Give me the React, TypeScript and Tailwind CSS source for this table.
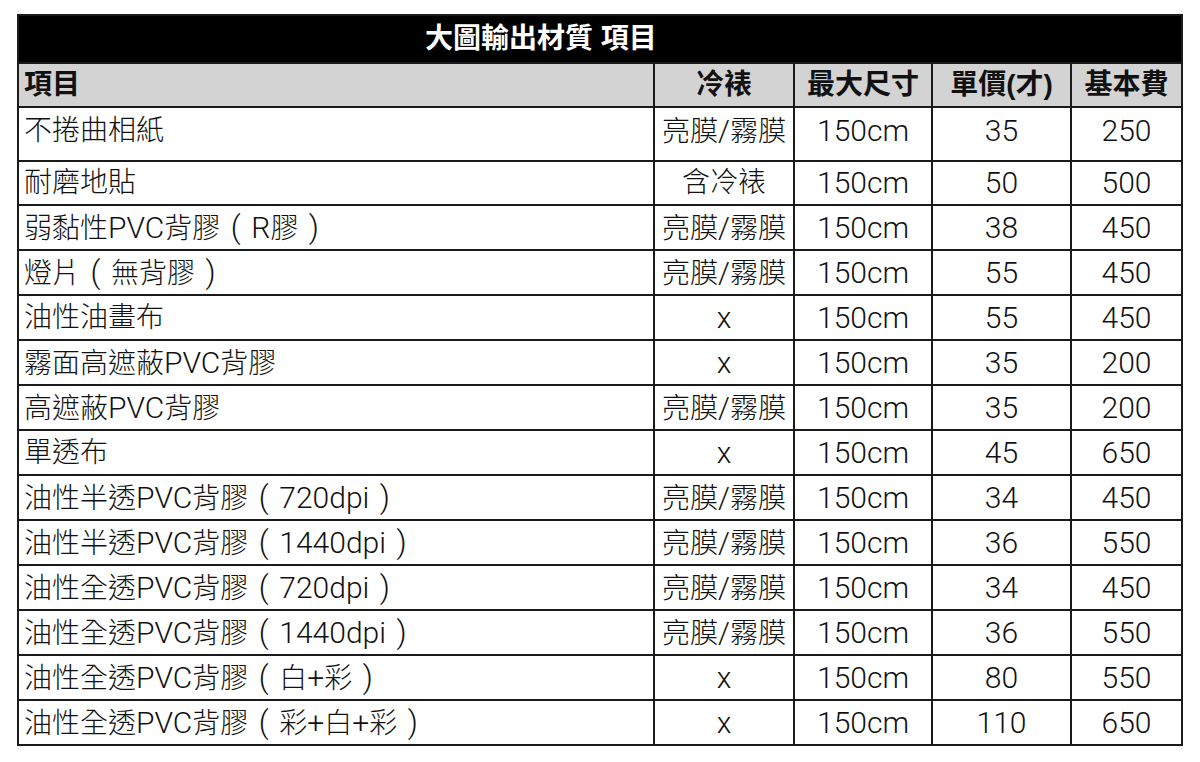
import React from "react";

type Row = {
  name: string;
  laminate: string;
  size: string;
  price: string;
  base: string;
};

const rows: Row[] = [
  { name: "不捲曲相紙", laminate: "亮膜/霧膜", size: "150cm", price: "35", base: "250" },
  { name: "耐磨地貼", laminate: "含冷裱", size: "150cm", price: "50", base: "500" },
  { name: "弱黏性PVC背膠（R膠）", laminate: "亮膜/霧膜", size: "150cm", price: "38", base: "450" },
  { name: "燈片（無背膠）", laminate: "亮膜/霧膜", size: "150cm", price: "55", base: "450" },
  { name: "油性油畫布", laminate: "x", size: "150cm", price: "55", base: "450" },
  { name: "霧面高遮蔽PVC背膠", laminate: "x", size: "150cm", price: "35", base: "200" },
  { name: "高遮蔽PVC背膠", laminate: "亮膜/霧膜", size: "150cm", price: "35", base: "200" },
  { name: "單透布", laminate: "x", size: "150cm", price: "45", base: "650" },
  { name: "油性半透PVC背膠（720dpi）", laminate: "亮膜/霧膜", size: "150cm", price: "34", base: "450" },
  { name: "油性半透PVC背膠（1440dpi）", laminate: "亮膜/霧膜", size: "150cm", price: "36", base: "550" },
  { name: "油性全透PVC背膠（720dpi）", laminate: "亮膜/霧膜", size: "150cm", price: "34", base: "450" },
  { name: "油性全透PVC背膠（1440dpi）", laminate: "亮膜/霧膜", size: "150cm", price: "36", base: "550" },
  { name: "油性全透PVC背膠（白+彩）", laminate: "x", size: "150cm", price: "80", base: "550" },
  { name: "油性全透PVC背膠（彩+白+彩）", laminate: "x", size: "150cm", price: "110", base: "650" },
];

const bodyFont = {
  fontFamily: 'Roboto, "Noto Sans CJK TC", sans-serif',
};
const headFont = {
  fontFamily: '"Liberation Sans", "Noto Sans CJK TC", sans-serif',
};

// latin runs are set a touch larger than the CJK text, and the full-width
// parens get a centred glyph like the original sheet
function Mixed({ text }: { text: string }) {
  const parts = text.split(/([\x20-\x7e]+|[（）])/).filter(Boolean);
  return (
    <>
      {parts.map((p, i) => {
        if (p === "（" || p === "）") {
          return (
            <span key={i} className="inline-block w-[31px] text-center text-[31px]">
              {p === "（" ? "(" : ")"}
            </span>
          );
        }
        if (/^[\x20-\x7e]+$/.test(p)) {
          return (
            <span key={i} className="text-[30px]">
              {p}
            </span>
          );
        }
        return <span key={i}>{p}</span>;
      })}
    </>
  );
}

const cell = "border-2 border-[#1a1a1a]";

export default function App() {
  return (
    <div className="min-h-screen bg-white pl-[17px] pt-[14px]" style={bodyFont}>
      <table className="w-[1164px] table-fixed border-collapse border-2 border-[#1a1a1a] text-[28px] font-light leading-none text-[#111]">
        <colgroup>
          <col className="w-[636px]" />
          <col className="w-[140px]" />
          <col className="w-[138px]" />
          <col className="w-[139px]" />
          <col className="w-[111px]" />
        </colgroup>
        <thead style={headFont}>
          <tr className="h-[48px] bg-black">
            <th colSpan={5} className={`${cell} pl-[406px] text-left text-[28px] font-bold text-white`}>
              大圖輸出材質 項目
            </th>
          </tr>
          <tr className="h-[44px] bg-[#d3d3d3] text-[28px] font-bold">
            <th className={`${cell} pl-[5px] text-left`}>項目</th>
            <th className={`${cell} text-center`}>冷裱</th>
            <th className={`${cell} text-center`}>最大尺寸</th>
            <th className={`${cell} text-center`}>單價(才)</th>
            <th className={`${cell} text-center`}>基本費</th>
          </tr>
        </thead>
        <tbody>
          {rows.map((r, i) => {
            const pad = i === 0 ? "pb-[6px]" : "";
            return (
              <tr key={r.name} className={i === 0 ? "h-[54px]" : i === 1 ? "h-[44px]" : "h-[45px]"}>
                <td className={`${cell} ${pad} whitespace-nowrap pl-[5px] text-left`}>
                  <Mixed text={r.name} />
                </td>
                <td className={`${cell} ${pad} text-center`}>
                  <Mixed text={r.laminate} />
                </td>
                <td className={`${cell} ${pad} text-center text-[30px]`}>{r.size}</td>
                <td className={`${cell} ${pad} text-center text-[30px]`}>{r.price}</td>
                <td className={`${cell} ${pad} text-center text-[30px]`}>{r.base}</td>
              </tr>
            );
          })}
        </tbody>
      </table>
    </div>
  );
}
